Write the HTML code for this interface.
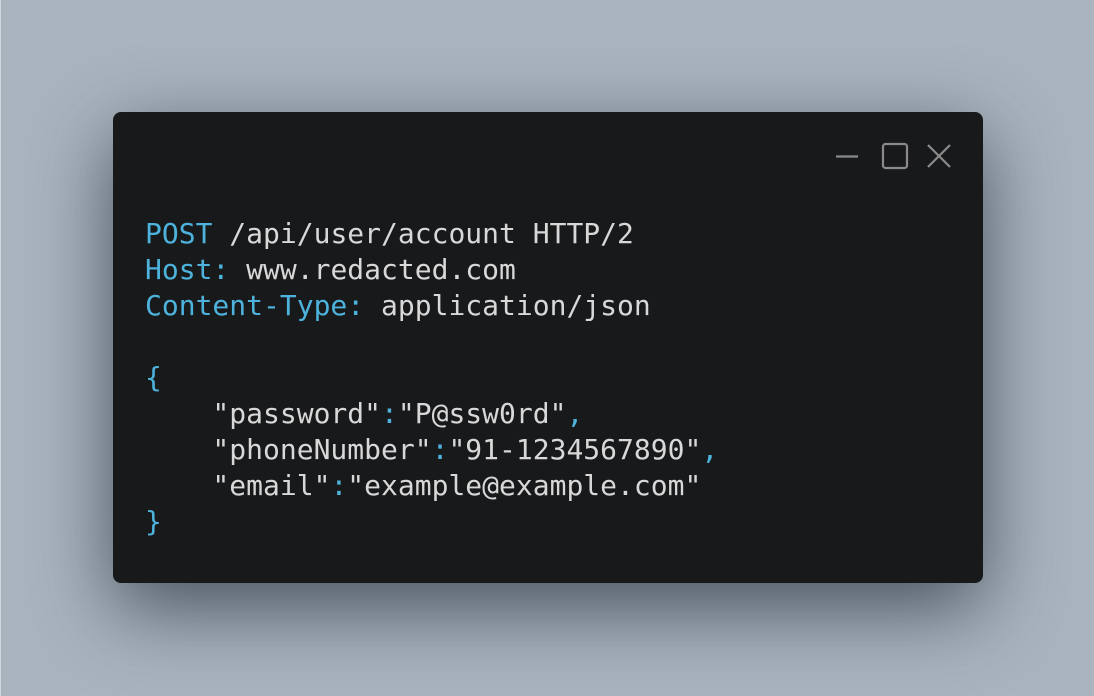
<!DOCTYPE html>
<html><head><style>
html,body{margin:0;padding:0}
body{width:1094px;height:696px;background:#a9b4bf;position:relative;overflow:hidden}
.edge{position:absolute;left:0;top:0;width:1px;height:696px;background:#d0d6dc}
.win{position:absolute;left:113px;top:112px;width:870px;height:471px;background:#18191b;border-radius:8px;box-shadow:0 25px 80px rgba(30,40,50,.7)}
pre{position:absolute;left:32px;top:104px;margin:0;font-family:"DejaVu Sans Mono","Liberation Mono",monospace;font-size:28px;line-height:36px;color:#d8d8d8}
.b{color:#4db3dc}
svg{position:absolute;left:720px;top:28px}
</style></head><body>
<div class="edge"></div>
<div class="win">
<svg width="130" height="32" viewBox="0 0 130 32"><g stroke="#8a8a8a" stroke-width="2.2" fill="none"><line x1="3" y1="16.5" x2="25" y2="16.5"/><rect x="50" y="4" width="24" height="24" rx="2.5"/><line x1="95" y1="5" x2="117" y2="27"/><line x1="117" y1="5" x2="95" y2="27"/></g></svg>
<pre><span class="b">POST</span> /api/user/account HTTP/2
<span class="b">Host:</span> www.redacted.com
<span class="b">Content-Type:</span> application/json

<span class="b">{</span>
    "password"<span class="b">:</span>"P@ssw0rd"<span class="b">,</span>
    "phoneNumber"<span class="b">:</span>"91-1234567890"<span class="b">,</span>
    "email"<span class="b">:</span>"example@example.com"
<span class="b">}</span></pre>
</div>
</body></html>
